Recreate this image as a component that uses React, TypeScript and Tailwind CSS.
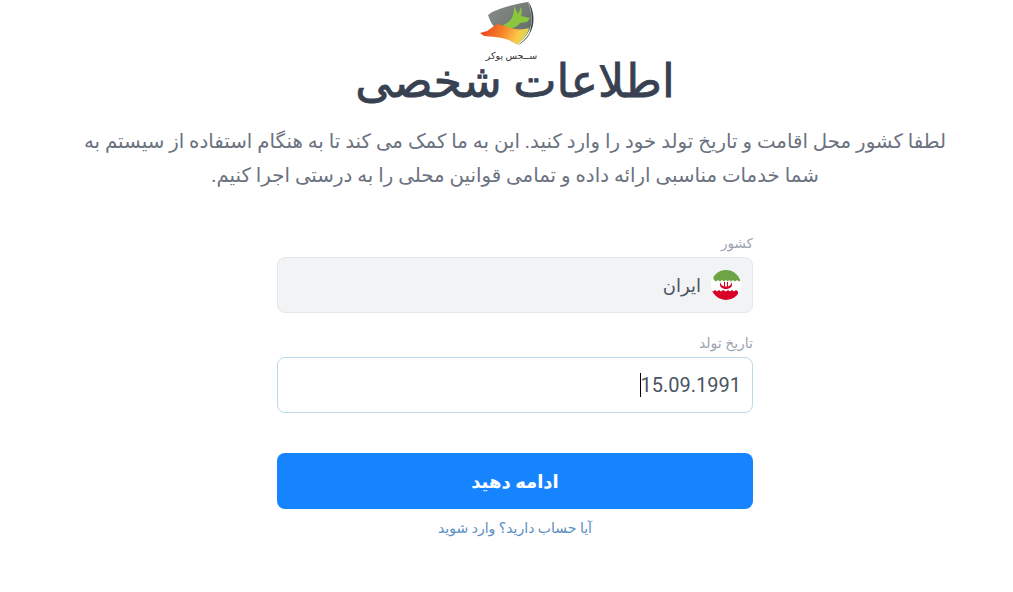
export default function App() {
  return (
    <div dir="rtl" className="w-[1013px] h-[592px] overflow-hidden bg-white pl-[17px] flex flex-col items-center font-['Roboto','DejaVu_Sans',sans-serif]">
      <div className="h-[62px] w-[90px] flex flex-col items-center shrink-0">
        <svg width="65" height="50" viewBox="475 -1 65 50" className="shrink-0 mr-[15px]">
          <defs>
            <linearGradient id="fire" x1="0" y1="0" x2="1" y2="0.2">
              <stop offset="0" stopColor="#e8391c" />
              <stop offset="0.5" stopColor="#f7802a" />
              <stop offset="0.85" stopColor="#fbc94a" />
              <stop offset="1" stopColor="#d8d650" />
            </linearGradient>
            <linearGradient id="shield" x1="0" y1="0" x2="1" y2="1">
              <stop offset="0" stopColor="#8b8e8a" />
              <stop offset="1" stopColor="#5c6a60" />
            </linearGradient>
          </defs>
          <path d="M488 14C495 8 515 3 528 1C532 12 533 22 529 30C526 36 521 40 517 43C505 38 492 28 488 14z" fill="url(#shield)" />
          <path d="M514 5C516 9 517 11 518 13L521 6C522 9 522 12 521 15L530 17L527 21L520 22C517 26 512 28 507 28L503 24C509 22 512 18 513 14C514 11 514 8 514 5z" fill="#8cc63f" />
          <path d="M528 0C535 10 535 24 530 32C527 38 522 42 518 44C523 40 528 36 530 30C533 20 532 10 528 0z" fill="#3f4648" />
          <path d="M480 32L487 30L497 23L508 26C515 29 523 29 529 27C528 33 522 40 517 44C512 39 503 37 495 36L484 35z" fill="url(#fire)" />
        </svg>
        <div className="mt-[1px] mr-[7px] text-[9.500px] leading-[10px] text-[#333] whitespace-nowrap">ســجس پوکر</div>
      </div>
      <h1 className="mt-[-1px] text-[46px] leading-[40px] font-normal text-[#374151] [-webkit-text-stroke:0.8px_#374151]">اطلاعات شخصی</h1>
      <p className="mt-[24px] w-[890px] text-center text-[19.8px] leading-[34px] text-[#6b7280]">
        لطفا کشور محل اقامت و تاریخ تولد خود را وارد کنید. این به ما کمک می کند تا به هنگام استفاده از سیستم به شما خدمات مناسبی ارائه داده و تمامی قوانین محلی را به درستی اجرا کنیم.
      </p>
      <div className="mt-[42px] w-[476px] flex flex-col">
        <label className="text-[13.500px] leading-[16px] text-[#9ca3af] mb-[6px]">کشور</label>
        <div className="h-[56px] rounded-lg border border-[#e5e7eb] bg-[#f1f3f4] flex items-center gap-[10px] px-[11px]">
          <svg width="30" height="32" viewBox="0 0 30 32">
            <clipPath id="c"><circle cx="15" cy="16" r="15" /></clipPath>
            <g clipPath="url(#c)">
              <rect width="30" height="32" fill="#ffffff" />
              <path d="M0 0h30v11l-2 1.500-2-1.500-2 1.500-2-1.500-2 1.500-2-1.500-1 1.500-2-1.500-2 1.500-2-1.500-2 1.500-2-1.500-2 1.500-2-1.500z" fill="#6da544" />
              <path d="M0 21l2 1.500 2-1.500 2 1.500 2-1.500 2 1.500 2-1.500 3 1.500 2-1.500 2 1.500 2-1.500 2 1.500 2-1.500 2 1.500V32H0z" fill="#d80027" />
              <path d="M9 13v3c0 2 3 4 6 4s6-2 6-4v-3l-1.500 3-2.500 1.500V13h-1v4.500h-2V13h-1v4.500L10.500 16z" fill="#d80027" />
            </g>
          </svg>
          <span className="text-[18px] text-[#4b5563]">ایران</span>
        </div>
        <label className="mt-[22px] text-[14px] leading-[16px] text-[#9ca3af] mb-[6px]">تاریخ تولد</label>
        <div className="h-[56px] rounded-lg border border-[#bcdbe8] bg-white flex items-center px-[11px]">
          <span className="text-[20px] text-[#4b5563]">15.09.1991</span>
          <span className="w-px h-[24px] bg-black" />
        </div>
        <button className="mt-[40px] h-[56px] rounded-lg bg-[#1784ff] text-white text-[18px] font-bold">ادامه دهید</button>
        <a className="mt-[10px] text-center text-[14px] leading-[18px] text-[#5b8fc2]">آیا حساب دارید؟ وارد شوید</a>
      </div>
    </div>
  );
}
